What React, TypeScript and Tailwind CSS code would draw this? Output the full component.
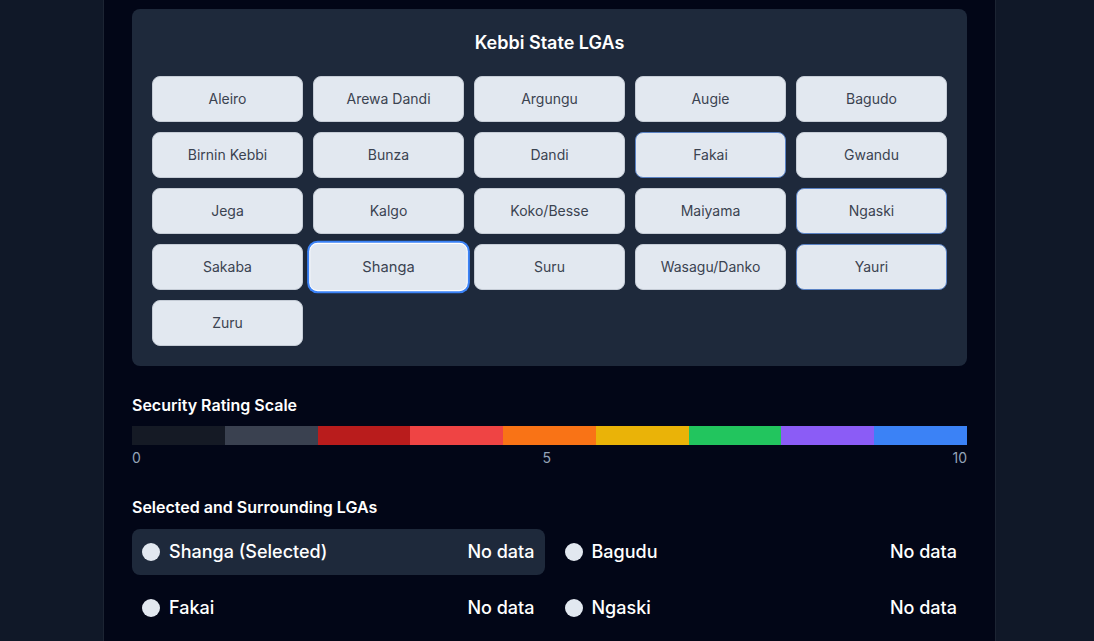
import React from "react";

const lgas = [
  "Aleiro", "Arewa Dandi", "Argungu", "Augie", "Bagudo",
  "Birnin Kebbi", "Bunza", "Dandi", "Fakai", "Gwandu",
  "Jega", "Kalgo", "Koko/Besse", "Maiyama", "Ngaski",
  "Sakaba", "Shanga", "Suru", "Wasagu/Danko", "Yauri",
  "Zuru",
];

const selected = "Shanga";
const neighbours = ["Fakai", "Ngaski", "Yauri"];

const scale = [
  "bg-[#151a25]", "bg-[#3a4150]", "bg-[#b91c1c]", "bg-[#ef4444]", "bg-[#f97316]",
  "bg-[#eab308]", "bg-[#22c55e]", "bg-[#8b5cf6]", "bg-[#3b82f6]",
];

const nearby = [
  { name: "Shanga (Selected)", value: "No data", active: true },
  { name: "Bagudu", value: "No data", active: false },
  { name: "Fakai", value: "No data", active: false },
  { name: "Ngaski", value: "No data", active: false },
];

function LgaButton({ name }: { name: string }) {
  const isSelected = name === selected;
  const isNeighbour = neighbours.includes(name);
  const state = isSelected
    ? "scale-105 border-[1.5px] border-white ring-2 ring-[#3b82f6]"
    : isNeighbour
      ? "border border-[#5a82c4]"
      : "border border-[#c5ccd6]";
  return (
    <button
      className={`h-[46px] rounded-lg bg-[#e2e8f0] text-sm text-[#3b4350] ${state}`}
    >
      {name}
    </button>
  );
}

export default function App() {
  return (
    <div
      className="flex h-[641px] w-full overflow-hidden bg-[#020617] text-white"
      style={{ fontFamily: "Inter, 'Noto Sans', sans-serif" }}
    >
      <aside className="w-[104px] shrink-0 border-r border-[#1c2433] bg-[#101828]" />
      <main className="flex-1 px-7 pt-[9px]">
        <section className="rounded-lg bg-[#1e293b] px-5 pb-5 pt-5">
          <h2 className="mb-[19px] text-center text-lg font-semibold leading-7">
            Kebbi State LGAs
          </h2>
          <div className="grid grid-cols-5 gap-2.5">
            {lgas.map((n) => (
              <LgaButton key={n} name={n} />
            ))}
          </div>
        </section>

        <section className="mt-[27px]">
          <h3 className="text-base font-semibold leading-6">Security Rating Scale</h3>
          <div className="mt-[9px] flex h-[19px]">
            {scale.map((c, i) => (
              <div key={i} className={`flex-1 ${c}`} />
            ))}
          </div>
          <div className="mt-[3px] flex justify-between text-sm leading-5 text-[#94a3b8]">
            <span>0</span>
            <span>5</span>
            <span>10</span>
          </div>
        </section>

        <section className="mt-[27px]">
          <h3 className="text-base font-semibold leading-6">Selected and Surrounding LGAs</h3>
          <div className="mt-[10px] grid grid-cols-2 gap-2.5">
            {nearby.map((r) => (
              <div
                key={r.name}
                className={`flex h-[46px] items-center justify-between rounded-lg px-2.5 ${r.active ? "bg-[#1e293b]" : ""}`}
              >
                <div className="flex items-center gap-[9px]">
                  <span className="h-[18px] w-[18px] rounded-full bg-[#e2e8f0]" />
                  <span className="text-lg font-medium">{r.name}</span>
                </div>
                <span className="text-lg font-medium">{r.value}</span>
              </div>
            ))}
          </div>
        </section>
      </main>
      <aside className="w-[99px] shrink-0 border-l border-[#1c2433] bg-[#101828]" />
    </div>
  );
}
